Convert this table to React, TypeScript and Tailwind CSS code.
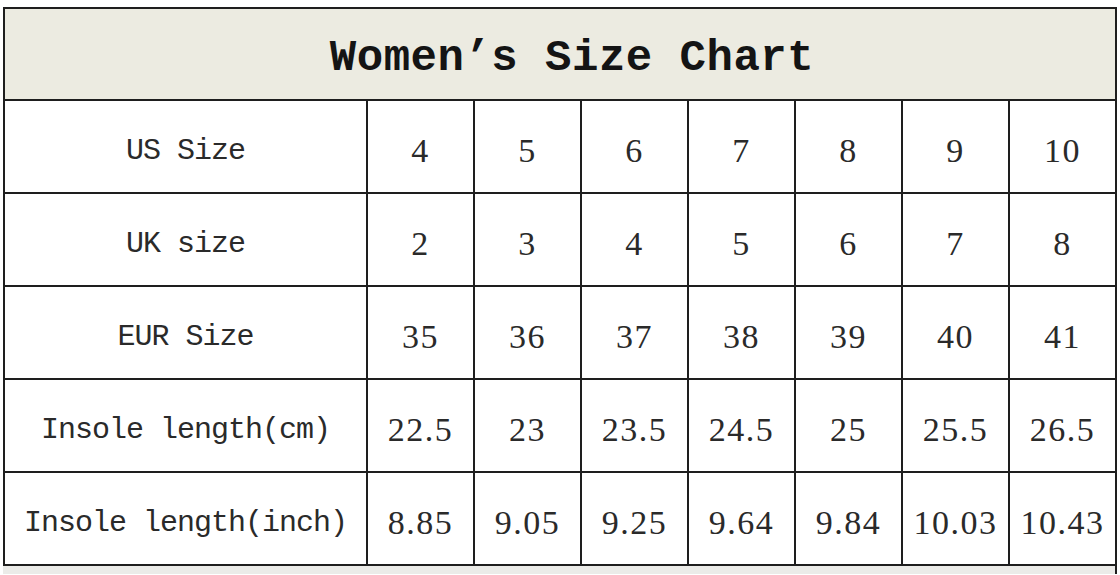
const rows: { label: string; values: string[] }[] = [
  { label: "US Size", values: ["4", "5", "6", "7", "8", "9", "10"] },
  { label: "UK size", values: ["2", "3", "4", "5", "6", "7", "8"] },
  { label: "EUR Size", values: ["35", "36", "37", "38", "39", "40", "41"] },
  { label: "Insole length(cm)", values: ["22.5", "23", "23.5", "24.5", "25", "25.5", "26.5"] },
  { label: "Insole length(inch)", values: ["8.85", "9.05", "9.25", "9.64", "9.84", "10.03", "10.43"] },
]

export default function App() {
  return (
    <div className="min-h-[575px] w-[1120px] bg-white pl-[3px] pt-[7px]">
      <div className="grid w-[1114px] grid-cols-[361px_repeat(7,105px)] grid-rows-[90px_repeat(5,91px)] gap-[2px] bg-[#1e1e1e] p-[2px]">
        <div className="col-span-8 flex items-center justify-center bg-[#ecebe1] pl-[24px] pt-[8px]">
          <span className="font-['Liberation_Mono',monospace] text-[44px] font-bold leading-none tracking-[0.5px] text-[#141414]">
            Women’s Size Chart
          </span>
        </div>
        {rows.map((row) => (
          <>
            <div
              key={row.label}
              className="flex items-center justify-center bg-white pt-[8px] font-['Liberation_Mono',monospace] text-[30px] leading-none tracking-[-1px] text-[#2a2a2a]"
            >
              {row.label}
            </div>
            {row.values.map((v, i) => (
              <div
                key={row.label + i}
                className="flex items-center justify-center bg-white pt-[8px] font-['Liberation_Serif',serif] text-[34px] leading-none tracking-[1.5px] text-[#2a2a2a]"
              >
                {v}
              </div>
            ))}
          </>
        ))}
      </div>
      <div className="h-[8px] w-[1114px] border-r-2 border-[#1e1e1e] bg-[#ebebe8]" />
    </div>
  )
}
